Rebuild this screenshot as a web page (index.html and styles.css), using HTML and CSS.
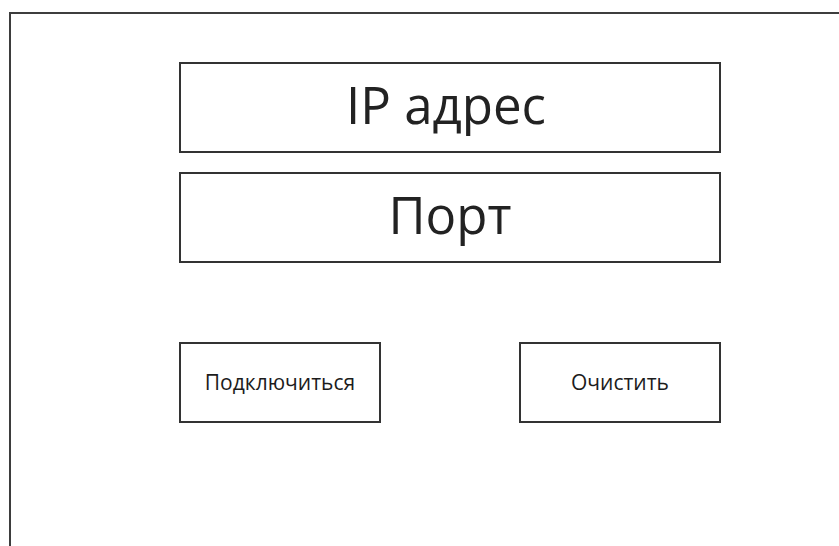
FILE: index.html
```html
<!DOCTYPE html>
<html lang="ru">
<head>
<meta charset="utf-8">
<title>Подключение</title>
<link rel="stylesheet" href="styles.css">
</head>
<body>
  <div class="window">
    <div class="form">
      <div class="field field-ip">IP адрес</div>
      <div class="field">Порт</div>
      <div class="actions">
        <div class="btn">Подключиться</div>
        <div class="btn">Очистить</div>
      </div>
    </div>
  </div>
</body>
</html>
```

FILE: styles.css
```css
html, body {
  margin: 0;
  padding: 0;
  height: 100%;
  background: #fff;
  overflow: hidden;
}

body {
  font-family: "Open Sans", "Noto Sans", sans-serif;
  color: #1c1c1c;
}

/* Outer window frame: only top and left edges are visible */
.window {
  box-sizing: border-box;
  margin: 12px 0 0 9px;
  height: calc(100% - 12px);
  border-top: 2px solid #3d3d3d;
  border-left: 2px solid #3d3d3d;
  padding: 48px 0 0 168px;
}

.form {
  width: 542px;
  display: flex;
  flex-direction: column;
  gap: 19px;
}

.field {
  box-sizing: border-box;
  height: 91px;
  border: 2px solid #333;
  display: flex;
  align-items: center;
  justify-content: center;
  font-size: 51px;
  line-height: 1;
  padding: 0 0 6px 0;
  color: #222;
}

/* address label sits slightly left of centre */
.field-ip {
  padding-right: 8px;
}

.actions {
  margin-top: 60px;
  display: flex;
  justify-content: space-between;
}

.btn {
  box-sizing: border-box;
  width: 202px;
  height: 81px;
  border: 2px solid #333;
  display: flex;
  align-items: center;
  justify-content: center;
  font-size: 21px;
  padding-bottom: 1px;
  color: #1c1c1c;
}
```
